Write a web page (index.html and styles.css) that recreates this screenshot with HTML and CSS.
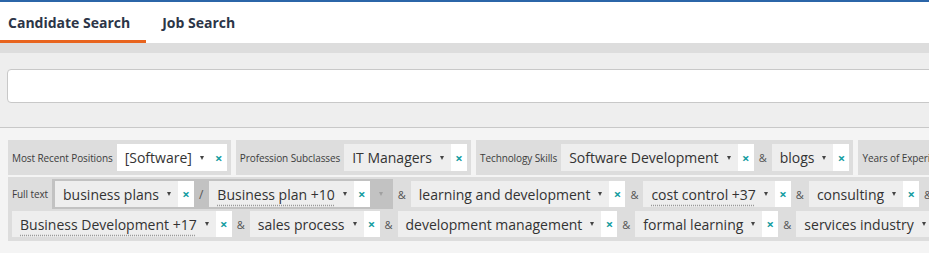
FILE: index.html
```html
<!doctype html>
<html lang="en">
  <head>
    <meta charset="UTF-8" />
    <title>Candidate Search</title>
    <link rel="stylesheet" href="styles.css">
  </head>
  <body>
    <div class="tabs">
      <div class="tab active">Candidate Search</div>
      <div class="tab">Job Search</div>
    </div>
    <div class="tab-strip"></div>

    <div class="search">
      <input class="search-input" type="text" />
    </div>

    <div class="filters">
      <div class="filter-row">
        <div class="filter">
          <span class="filter-label">Most Recent Positions</span>
          <span class="chip chip-white">
            <span class="chip-value">[Software]<span class="caret"></span></span>
            <span class="chip-remove">×</span>
          </span>
        </div>
        <div class="filter">
          <span class="filter-label">Profession Subclasses</span>
          <span class="chip">
            <span class="chip-value">IT Managers<span class="caret"></span></span>
            <span class="chip-remove">×</span>
          </span>
        </div>
        <div class="filter">
          <span class="filter-label">Technology Skills</span>
          <span class="chip">
            <span class="chip-value">Software Development<span class="caret"></span></span>
            <span class="chip-remove">×</span>
          </span>
          <span class="op">&amp;</span>
          <span class="chip">
            <span class="chip-value">blogs<span class="caret"></span></span>
            <span class="chip-remove">×</span>
          </span>
        </div>
        <div class="filter">
          <span class="filter-label">Years of Experience</span>
          <span class="chip">
            <span class="chip-value">5+<span class="caret"></span></span>
            <span class="chip-remove">×</span>
          </span>
        </div>
      </div>

      <div class="filter filter-wrap">
        <span class="filter-label">Full text</span>
        <span class="or-group">
          <span class="chip">
            <span class="chip-value">business plans<span class="caret"></span></span>
            <span class="chip-remove">×</span>
          </span>
          <span class="op-or">/</span>
          <span class="chip">
            <span class="chip-value"><span class="more">Business plan +10</span><span class="caret"></span></span>
            <span class="chip-remove">×</span>
          </span>
          <span class="or-caret"><span class="caret caret-faint"></span></span>
        </span>
        <span class="op">&amp;</span>
        <span class="chip">
          <span class="chip-value">learning and development<span class="caret"></span></span>
          <span class="chip-remove">×</span>
        </span>
        <span class="op">&amp;</span>
        <span class="chip">
          <span class="chip-value"><span class="more">cost control +37</span><span class="caret"></span></span>
          <span class="chip-remove">×</span>
        </span>
        <span class="op">&amp;</span>
        <span class="chip">
          <span class="chip-value">consulting<span class="caret"></span></span>
          <span class="chip-remove">×</span>
        </span>
        <span class="op">&amp;</span>
        <span class="chip">
          <span class="chip-value"><span class="more">Business Development +17</span><span class="caret"></span></span>
          <span class="chip-remove">×</span>
        </span>
        <span class="op">&amp;</span>
        <span class="chip">
          <span class="chip-value">sales process<span class="caret"></span></span>
          <span class="chip-remove">×</span>
        </span>
        <span class="op">&amp;</span>
        <span class="chip">
          <span class="chip-value">development management<span class="caret"></span></span>
          <span class="chip-remove">×</span>
        </span>
        <span class="op">&amp;</span>
        <span class="chip">
          <span class="chip-value">formal learning<span class="caret"></span></span>
          <span class="chip-remove">×</span>
        </span>
        <span class="op">&amp;</span>
        <span class="chip">
          <span class="chip-value">services industry<span class="caret"></span></span>
          <span class="chip-remove">×</span>
        </span>
      </div>
    </div>
  </body>
</html>
```

FILE: styles.css
```css
:root {
  --navy: #2c3547;
  --orange: #e8641e;
  --teal: #149da1;
  --gray-100: #f4f4f4;
  --gray-150: #eeeeee;
  --gray-200: #dddddd;
  --gray-300: #c8c8c8;
  --text: #333333;
}

* {
  box-sizing: border-box;
  margin: 0;
  padding: 0;
}

body {
  font-family: "Open Sans", "Liberation Sans", sans-serif;
  color: var(--text);
  background-color: var(--gray-100);
  border-top: 2px solid #2b65a8;
  overflow: hidden;
}

/* tabs */

.tabs {
  display: flex;
  height: 41px;
  background: white;
}

.tab {
  display: flex;
  align-items: center;
  padding: 3px 16px 0;
  font-size: 14px;
  font-weight: 700;
  color: var(--navy);
  border-bottom: 3px solid transparent;
}

.tab:first-child {
  padding-left: 8px;
}

.tab.active {
  border-bottom-color: var(--orange);
}

.tab-strip {
  height: 10px;
  background: var(--gray-200);
}

/* search box */

.search {
  background: var(--gray-150);
  padding: 16px 0 24px 7px;
  border-bottom: 1px solid var(--gray-300);
}

.search-input {
  display: block;
  width: 1200px;
  height: 34px;
  border: 1px solid var(--gray-300);
  border-radius: 4px;
  background: white;
}

/* filters */

.filters {
  padding: 12px 8px;
}

.filter-row {
  display: flex;
  gap: 5px;
  margin-bottom: 2px;
}

.filter {
  display: flex;
  align-items: center;
  flex-shrink: 0;
  padding: 4px;
  background: var(--gray-200);
}

.filter-label {
  font-size: 10px;
  letter-spacing: -0.1px;
  color: #3c3c3c;
  margin-right: 4px;
  white-space: nowrap;
}

.filter-wrap {
  width: 950px;
  flex-wrap: wrap;
  row-gap: 2px;
  padding: 2px 4px 4px;
}

.chip {
  display: flex;
  height: 27px;
  white-space: nowrap;
}

.filter-wrap .chip {
  height: 26px;
}

.chip-value {
  display: flex;
  align-items: center;
  padding: 0 7px 0 8px;
  font-size: 14px;
  background: var(--gray-150);
}

.chip-white .chip-value {
  background: white;
}

.caret {
  display: inline-block;
  width: 0;
  height: 0;
  margin-left: 8px;
  border-left: 2.5px solid transparent;
  border-right: 2.5px solid transparent;
  border-top: 4px solid #444;
}

.caret-faint {
  margin-left: 0;
  border-top-color: #a0a0a0;
}

.more {
  text-decoration: underline dotted #9a9a9a;
  text-underline-offset: 5px;
}

.chip-remove {
  display: flex;
  align-items: center;
  justify-content: center;
  width: 16px;
  background: white;
  color: var(--teal);
  font-size: 13px;
  font-weight: 700;
}

.op {
  font-size: 11px;
  color: #555;
  margin: 0 5px;
}

.or-group {
  display: flex;
  align-items: center;
  padding: 2px 0 2px 3px;
  background: #c2c2c2;
}

.op-or {
  font-size: 12px;
  color: #555;
  margin: 0 6px 0 5px;
}

.or-caret {
  display: flex;
  justify-content: center;
  width: 23px;
}
```
